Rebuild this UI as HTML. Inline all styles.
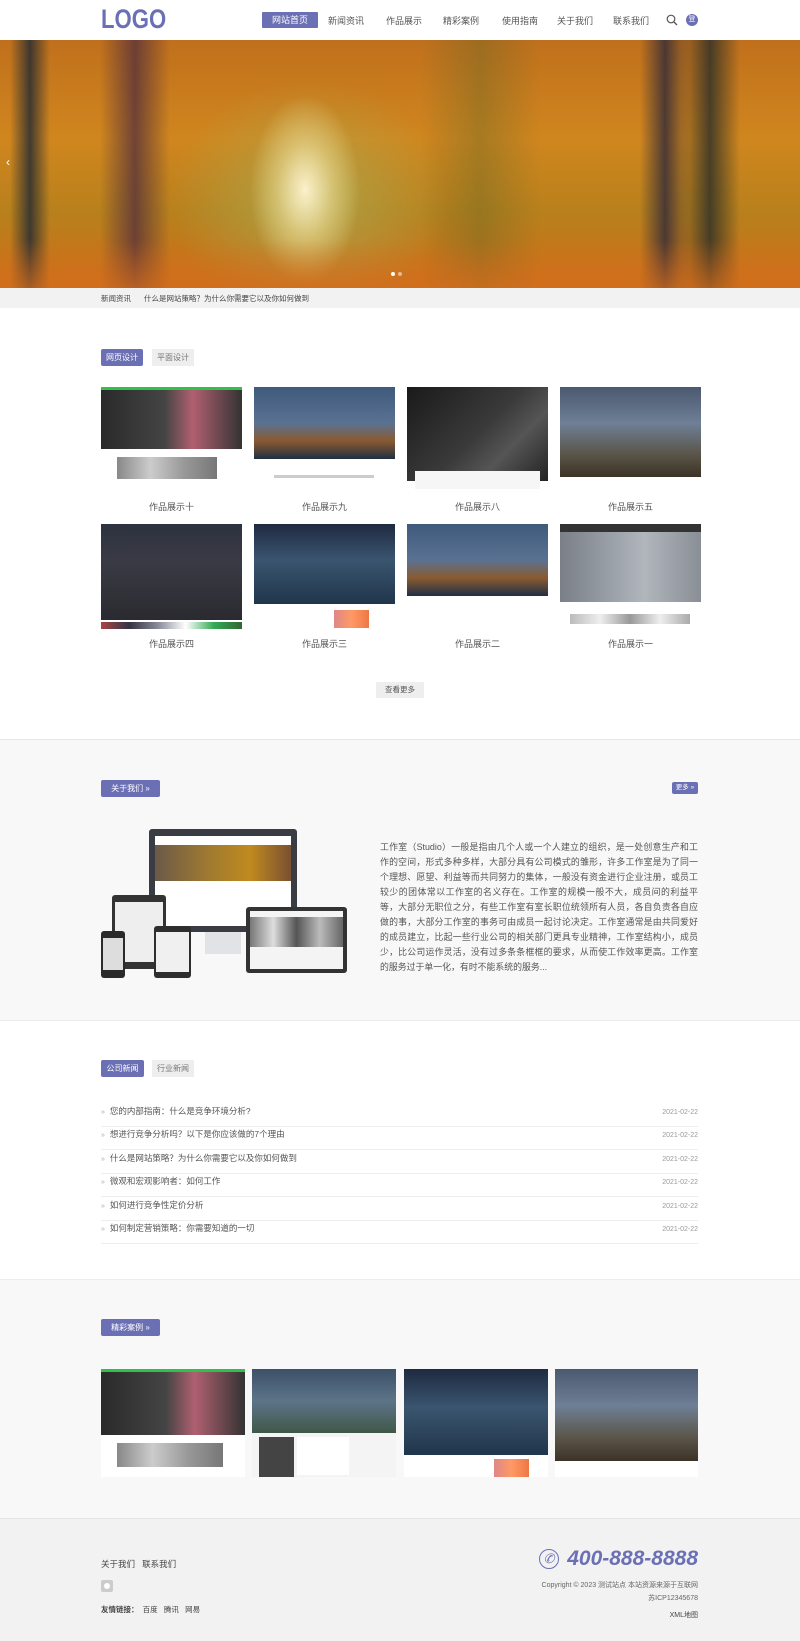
<!DOCTYPE html>
<html><head><meta charset="utf-8">
<style>
*{margin:0;padding:0;box-sizing:border-box}
body{width:800px;height:1641px;position:relative;background:#fff;font-family:"Liberation Sans","Noto Sans CJK SC",sans-serif;color:#555;overflow:hidden}
.a{position:absolute}
.nav{font-size:9px;color:#555;top:14px;line-height:14px;white-space:nowrap;transform:translateX(-50%)}
.btn{background:#6b70b4;color:#fff;font-size:8px;line-height:17px;text-align:center;border-radius:2px}
.gbtn{background:#eee;color:#777;font-size:8px;line-height:17px;text-align:center}
.th{position:absolute;width:141px;height:105px;background:#fff;overflow:hidden}
.th .t{position:absolute;left:0;top:0;width:100%}
.cap{position:absolute;width:141px;text-align:center;font-size:9px;color:#555}
.ln{position:absolute;left:101px;width:597px;font-size:8.5px;color:#555;height:23px;border-bottom:1px solid #eee;line-height:14px}
.ln .d{position:absolute;right:0;top:2px;font-size:7px;color:#999}
.ln::before{content:"»";color:#aaa;font-size:7px;margin-right:5px}
.tr{position:absolute;top:0;height:248px}
</style></head><body>
<!-- header -->
<div class="a" style="left:101px;top:4px;font-size:27px;font-weight:bold;color:#6b70b4;font-family:'Liberation Sans',sans-serif;transform:scaleX(0.82);transform-origin:left top">LOGO</div>
<div class="a btn" style="left:262px;top:12px;width:56px;height:16px;line-height:16px;font-size:9px;border-radius:1px">网站首页</div>
<div class="a nav" style="left:346px">新闻资讯</div>
<div class="a nav" style="left:404px">作品展示</div>
<div class="a nav" style="left:461px">精彩案例</div>
<div class="a nav" style="left:520px">使用指南</div>
<div class="a nav" style="left:575px">关于我们</div>
<div class="a nav" style="left:631px">联系我们</div>
<svg class="a" style="left:666px;top:14px" width="12" height="12" viewBox="0 0 12 12"><circle cx="5" cy="5" r="3.8" fill="none" stroke="#555" stroke-width="1.2"/><path d="M8 8l3 3" stroke="#555" stroke-width="1.3"/></svg>
<div class="a" style="left:686px;top:14px;width:12px;height:12px;border-radius:50%;background:#6b70b4;color:#fff;font-size:7px;line-height:12px;text-align:center">登</div>
<!-- banner -->
<div class="a" style="left:0;top:40px;width:800px;height:248px;overflow:hidden;background:
radial-gradient(ellipse 55px 95px at 305px 150px,rgba(255,245,210,.95),rgba(235,220,150,.6) 50%,rgba(0,0,0,0) 100%),
radial-gradient(ellipse 140px 120px at 310px 160px,rgba(170,170,80,.8),rgba(0,0,0,0) 100%),
linear-gradient(180deg,#c0701c 0,#d0861e 40%,#b8801c 70%,#cf6e18 100%)">
<div class="tr" style="left:10px;width:40px;background:linear-gradient(90deg,rgba(30,40,40,0),rgba(40,45,50,.85),rgba(30,40,40,0))"></div>
<div class="tr" style="left:100px;width:70px;background:linear-gradient(90deg,rgba(70,40,50,0),rgba(80,45,60,.75),rgba(70,40,50,0))"></div>
<div class="tr" style="left:640px;width:50px;background:linear-gradient(90deg,rgba(40,40,45,0),rgba(55,45,55,.85),rgba(40,40,45,0))"></div>
<div class="tr" style="left:680px;width:60px;background:linear-gradient(90deg,rgba(40,40,40,0),rgba(40,45,40,.8),rgba(40,40,40,0))"></div>
<div class="tr" style="left:420px;width:120px;background:linear-gradient(90deg,rgba(80,90,40,0),rgba(90,100,40,.35),rgba(80,90,40,0))"></div>
<div class="a" style="left:0;top:200px;width:800px;height:48px;background:linear-gradient(180deg,rgba(200,110,30,0),rgba(210,110,30,.7))"></div>
</div>
<div class="a" style="left:6px;top:155px;color:#fff;font-size:12px">‹</div>
<div class="a" style="left:391px;top:272px;width:4px;height:4px;border-radius:50%;background:#fff"></div>
<div class="a" style="left:398px;top:272px;width:4px;height:4px;border-radius:50%;background:rgba(255,255,255,.5)"></div>
<div class="a" style="left:0;top:288px;width:800px;height:20px;background:#f2f2f2"></div>
<div class="a" style="left:101px;top:293px;font-size:7.5px;color:#444">新闻资讯</div>
<div class="a" style="left:144px;top:293px;font-size:7.5px;color:#444">什么是网站策略？为什么你需要它以及你如何做到</div>
<!-- portfolio -->
<div class="a btn" style="left:101px;top:349px;width:42px">网页设计</div>
<div class="a gbtn" style="left:152px;top:349px;width:42px">平面设计</div>

<div class="th" style="left:101px;top:387px"><div class="t" style="height:62px;background:linear-gradient(90deg,#2a2a2a,#444 45%,#b06070 65%,#333);border-top:3px solid #2ec24a"></div><div class="a" style="left:16px;top:70px;width:100px;height:22px;background:linear-gradient(90deg,#888,#ccc,#999,#777)"></div></div>
<div class="th" style="left:254px;top:387px"><div class="t" style="height:72px;background:linear-gradient(180deg,#3f5a7c,#5a7292 50%,#8a5a30 75%,#1f2f44)"></div><div class="a" style="left:20px;top:88px;width:100px;height:3px;background:#ccc"></div></div>
<div class="th" style="left:407px;top:387px"><div class="t" style="height:94px;background:linear-gradient(135deg,#1a1a1a,#3a3a3a 50%,#555 70%,#222)"></div><div class="a" style="left:8px;top:84px;width:125px;height:18px;background:#f6f6f6"></div></div>
<div class="th" style="left:560px;top:387px"><div class="t" style="height:90px;background:linear-gradient(180deg,#4a5870,#6f7f96 40%,#5a5548 75%,#3b3326)"></div></div>

<div class="th" style="left:101px;top:524px"><div class="t" style="height:96px;background:linear-gradient(180deg,#2d3240,#3a3a44 40%,#2a2a30)"></div><div class="a" style="left:0;top:98px;width:141px;height:7px;background:linear-gradient(90deg,#a44,#334 20%,#889 40%,#fff 60%,#3a5 80%,#363)"></div></div>
<div class="th" style="left:254px;top:524px"><div class="t" style="height:80px;background:linear-gradient(180deg,#1e2a40,#3a5570 45%,#20354a)"></div><div class="a" style="left:80px;top:86px;width:35px;height:18px;background:linear-gradient(90deg,#d88,#f96,#e74)"></div></div>
<div class="th" style="left:407px;top:524px"><div class="t" style="height:72px;background:linear-gradient(180deg,#3f5a7c,#5a7292 50%,#8a5a30 75%,#1f2f44)"></div></div>
<div class="th" style="left:560px;top:524px"><div class="t" style="height:78px;background:linear-gradient(90deg,#7a7f88,#b0b6bc 60%,#8a8e96);border-top:8px solid #333"></div><div class="a" style="left:10px;top:90px;width:120px;height:10px;background:linear-gradient(90deg,#bbb,#eee,#999,#eee,#aaa)"></div></div>

<div class="cap" style="left:101px;top:500px">作品展示十</div>
<div class="cap" style="left:254px;top:500px">作品展示九</div>
<div class="cap" style="left:407px;top:500px">作品展示八</div>
<div class="cap" style="left:560px;top:500px">作品展示五</div>
<div class="cap" style="left:101px;top:637px">作品展示四</div>
<div class="cap" style="left:254px;top:637px">作品展示三</div>
<div class="cap" style="left:407px;top:637px">作品展示二</div>
<div class="cap" style="left:560px;top:637px">作品展示一</div>
<div class="a gbtn" style="left:376px;top:682px;width:48px;height:16px;line-height:16px;font-size:7.5px;color:#555">查看更多</div>

<!-- about -->
<div class="a" style="left:0;top:739px;width:800px;height:282px;background:#f8f8f9;border-top:1px solid #e6e6e6;border-bottom:1px solid #ececec"></div>
<div class="a btn" style="left:101px;top:780px;width:59px;height:17px">关于我们 »</div>
<div class="a btn" style="left:672px;top:782px;width:26px;height:12px;line-height:12px;font-size:6.5px">更多 »</div>
<div class="a" style="left:149px;top:829px;width:148px;height:103px;background:#3a3c44;border-radius:3px"></div>
<div class="a" style="left:155px;top:836px;width:136px;height:90px;background:#fff"></div>
<div class="a" style="left:155px;top:845px;width:136px;height:36px;background:linear-gradient(90deg,#6a5a48,#a07a30 40%,#c08a20 70%,#7a5030)"></div>
<div class="a" style="left:205px;top:932px;width:36px;height:22px;background:#e2e3e6"></div>
<div class="a" style="left:112px;top:895px;width:54px;height:74px;background:#333;border-radius:3px"></div>
<div class="a" style="left:115px;top:902px;width:48px;height:60px;background:#eee"></div>
<div class="a" style="left:101px;top:931px;width:24px;height:47px;background:#2a2a2a;border-radius:3px"></div>
<div class="a" style="left:103px;top:938px;width:20px;height:32px;background:#ddd"></div>
<div class="a" style="left:154px;top:926px;width:37px;height:52px;background:#2e2e2e;border-radius:3px"></div>
<div class="a" style="left:156px;top:932px;width:33px;height:40px;background:#f0f0f0"></div>
<div class="a" style="left:246px;top:907px;width:101px;height:66px;background:#333;border-radius:3px"></div>
<div class="a" style="left:250px;top:911px;width:93px;height:58px;background:#f4f4f4"></div>
<div class="a" style="left:250px;top:917px;width:93px;height:30px;background:linear-gradient(90deg,#777,#ddd,#555,#bbb,#666)"></div>
<div class="a" style="left:380px;top:840px;width:318px;font-size:8.9px;line-height:15px;color:#555;text-align:justify">工作室（Studio）一般是指由几个人或一个人建立的组织，是一处创意生产和工作的空间，形式多种多样，大部分具有公司模式的雏形，许多工作室是为了同一个理想、愿望、利益等而共同努力的集体，一般没有资金进行企业注册，或员工较少的团体常以工作室的名义存在。工作室的规模一般不大，成员间的利益平等，大部分无职位之分，有些工作室有室长职位统领所有人员，各自负责各自应做的事，大部分工作室的事务可由成员一起讨论决定。工作室通常是由共同爱好的成员建立，比起一些行业公司的相关部门更具专业精神，工作室结构小，成员少，比公司运作灵活，没有过多条条框框的要求，从而使工作效率更高。工作室的服务过于单一化，有时不能系统的服务...</div>

<!-- news -->
<div class="a btn" style="left:101px;top:1060px;width:43px;height:17px">公司新闻</div>
<div class="a gbtn" style="left:152px;top:1060px;width:42px;height:17px">行业新闻</div>
<div class="ln" style="top:1104px">您的内部指南：什么是竞争环境分析?<span class="d">2021-02-22</span></div>
<div class="ln" style="top:1127px">想进行竞争分析吗？以下是你应该做的7个理由<span class="d">2021-02-22</span></div>
<div class="ln" style="top:1151px">什么是网站策略？为什么你需要它以及你如何做到<span class="d">2021-02-22</span></div>
<div class="ln" style="top:1174px">微观和宏观影响者：如何工作<span class="d">2021-02-22</span></div>
<div class="ln" style="top:1198px">如何进行竞争性定价分析<span class="d">2021-02-22</span></div>
<div class="ln" style="top:1221px">如何制定营销策略：你需要知道的一切<span class="d">2021-02-22</span></div>

<!-- cases -->
<div class="a" style="left:0;top:1279px;width:800px;height:239px;background:#f8f8f9;border-top:1px solid #ececec"></div>
<div class="a btn" style="left:101px;top:1319px;width:59px;height:17px">精彩案例 »</div>
<div class="th" style="left:101px;top:1369px;width:144px;height:108px"><div class="t" style="height:66px;background:linear-gradient(90deg,#2a2a2a,#444 45%,#b06070 65%,#333);border-top:3px solid #2ec24a"></div><div class="a" style="left:16px;top:74px;width:106px;height:24px;background:linear-gradient(90deg,#888,#ccc,#999,#777)"></div></div>
<div class="th" style="left:252px;top:1369px;width:144px;height:108px;background:#f4f4f4"><div class="t" style="height:64px;background:linear-gradient(180deg,#3c5068,#5d7488 50%,#405848)"></div><div class="a" style="left:7px;top:68px;width:35px;height:40px;background:#444"></div><div class="a" style="left:45px;top:68px;width:52px;height:38px;background:#fff"></div></div>
<div class="th" style="left:404px;top:1369px;width:144px;height:108px"><div class="t" style="height:86px;background:linear-gradient(180deg,#1e2a40,#3a5570 45%,#20354a)"></div><div class="a" style="left:90px;top:90px;width:35px;height:18px;background:linear-gradient(90deg,#d88,#f96,#e74)"></div></div>
<div class="th" style="left:555px;top:1369px;width:143px;height:108px"><div class="t" style="height:92px;background:linear-gradient(180deg,#4a5870,#6f7f96 40%,#5a5548 75%,#3b3326)"></div></div>

<!-- footer -->
<div class="a" style="left:0;top:1518px;width:800px;height:123px;background:#f2f2f2;border-top:1px solid #e4e4e4"></div>
<div class="a" style="left:101px;top:1558px;font-size:8.5px;color:#444">关于我们&nbsp;&nbsp;&nbsp;联系我们</div>
<div class="a" style="left:101px;top:1580px;width:12px;height:12px;background:#ccc;border-radius:2px"></div>
<div class="a" style="left:104px;top:1583px;width:6px;height:6px;background:#fff;border-radius:50%"></div>
<div class="a" style="left:101px;top:1604px;font-size:7.5px;color:#444"><b>友情链接：</b>&nbsp;&nbsp;百度&nbsp;&nbsp;&nbsp;腾讯&nbsp;&nbsp;&nbsp;网易</div>
<div class="a" style="left:539px;top:1549px;width:20px;height:20px;border:1.5px solid #6b70b4;border-radius:50%;color:#6b70b4;font-size:13px;line-height:17px;text-align:center;font-style:italic">✆</div>
<div class="a" style="right:102px;top:1547px;font-size:21px;font-weight:bold;font-style:italic;color:#6b70b4">400-888-8888</div>
<div class="a" style="right:102px;top:1580px;font-size:7px;color:#666">Copyright © 2023 测试站点 本站资源来源于互联网</div>
<div class="a" style="right:102px;top:1593px;font-size:7px;color:#666">苏ICP12345678</div>
<div class="a" style="right:102px;top:1610px;font-size:7px;color:#444">XML地图</div>
</body></html>
